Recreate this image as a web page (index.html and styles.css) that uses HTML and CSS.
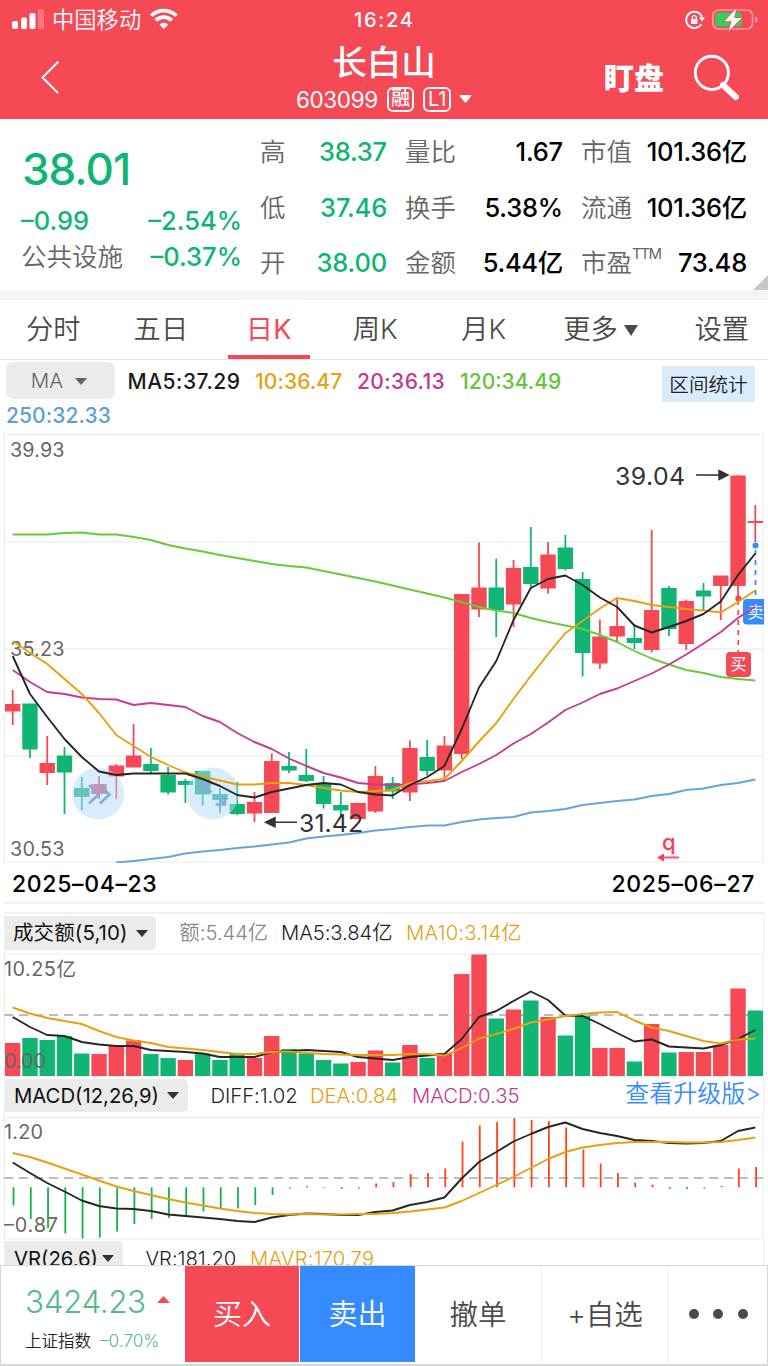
FILE: index.html
```html
<!DOCTYPE html>
<html lang="zh-CN">
<head>
<meta charset="utf-8">
<title>长白山 603099</title>
<link rel="stylesheet" href="styles.css">
</head>
<body>
<div class="app">
  <header class="header">
    <div class="status">
      <div class="status-left">
        <svg class="signal" width="33" height="22" viewBox="0 0 33 22"><g fill="#fff"><rect x="0" y="13" width="6" height="8" rx="2"/><rect x="9" y="9.500" width="6" height="11.500" rx="2"/><rect x="17.500" y="5" width="6" height="16" rx="2"/><rect x="26" y="1" width="6" height="20" rx="2" opacity=".25"/></g></svg>
        <span class="carrier">中国移动</span>
        <svg class="wifi" width="30" height="22" viewBox="0 0 30 22" fill="none" stroke="#fff" stroke-width="3.700"><path d="M2.200 7.700a18 18 0 0 1 25.200 0"/><path d="M6.800 12.400a11.500 11.500 0 0 1 16 0"/><path d="M14.800 21 10.300 16.500a6.700 6.700 0 0 1 9 0Z" fill="#fff" stroke="none"/></svg>
      </div>
      <span class="clock">16:24</span>
      <div class="status-right">
        <svg width="22" height="22" viewBox="0 0 22 22"><path d="M17.600 7A8.200 8.200 0 1 0 17 15.800" fill="none" stroke="#fff" stroke-width="1.900" stroke-linecap="round"/><path d="M14.600 8.300h6.400l-2.800 4.200z" fill="#fff"/><rect x="7" y="10" width="6.500" height="5" rx=".8" fill="#fff"/><path d="M8.300 10V8.600a2 2 0 0 1 4 0V10" fill="none" stroke="#fff" stroke-width="1.300"/></svg>
        <svg width="46" height="24" viewBox="0 0 46 24"><rect x="1" y="2" width="39.500" height="19" rx="5.500" fill="none" stroke="#fff" stroke-opacity=".45" stroke-width="1.700"/><path d="M43 8.500q2.500.5 2.500 3t-2.500 3z" fill="#fff" opacity=".45"/><rect x="3.500" y="4.500" width="26.500" height="14" rx="3.500" fill="#2fd158"/><path d="M24.500 0 12.500 13.200h7l-3 10.300L29.500 10h-7.300z" fill="#fff" stroke="#f54956" stroke-width="1.500" paint-order="stroke"/></svg>
      </div>
    </div>
    <div class="nav">
      <svg class="back" width="20" height="34" viewBox="0 0 20 34" fill="none" stroke="#fff" stroke-width="2"><path d="M18.500 1.500 2.500 17.500l15.500 15.500"/></svg>
      <div class="title">
        <h1>长白山</h1>
        <div class="code"><span>603099</span><i class="tag tag-cn">融</i><i class="tag">L1</i><svg width="13" height="8" viewBox="0 0 13 8"><path d="M1 0h11q1 0 .3 1L7.300 7.300q-.8.700-1.600 0L.7 1Q0 0 1 0z" fill="#fff"/></svg></div>
      </div>
      <div class="nav-right">
        <span class="watch">盯盘</span>
        <svg width="46" height="48" viewBox="0 0 46 48" fill="none" stroke="#fff"><circle cx="17.800" cy="18.800" r="16.600" stroke-width="3"/><path d="M29 31 41.800 43" stroke-width="6" stroke-linecap="round"/></svg>
      </div>
    </div>
  </header>

  <section class="quote">
    <div class="quote-main">
      <div class="price">38.01</div>
      <div class="row change"><span>–0.99</span><span>–2.54%</span></div>
      <div class="row sector"><span class="label">公共设施</span><span>–0.37%</span></div>
    </div>
    <dl class="stats">
      <div><dt>高</dt><dd class="down">38.37</dd></div><div><dt>量比</dt><dd>1.67</dd></div><div><dt>市值</dt><dd class="tight">101.36亿</dd></div>
      <div><dt>低</dt><dd class="down">37.46</dd></div><div><dt>换手</dt><dd>5.38%</dd></div><div><dt>流通</dt><dd class="tight">101.36亿</dd></div>
      <div><dt>开</dt><dd class="down">38.00</dd></div><div><dt>金额</dt><dd class="tight">5.44亿</dd></div><div><dt>市盈<sup>TTM</sup></dt><dd>73.48</dd></div>
    </dl>
    <i class="corner"></i>
  </section>

  <nav class="tabs">
    <span class="t1">分时</span><span class="t2">五日</span><span class="t3 active">日K</span><span class="t4">周K</span><span class="t5">月K</span><span class="t6">更多<i class="caret caret-lg"></i></span><span class="t7">设置</span>
  </nav>

  <section class="legend">
    <div class="legend-row">
      <span class="pill">MA<i class="caret"></i></span>
      <span class="ma5">MA5:37.29</span><span class="ma10">10:36.47</span><span class="ma20">20:36.13</span><span class="ma120">120:34.49</span>
      <span class="range">区间统计</span>
    </div>
    <div class="ma250">250:32.33</div>
  </section>

  <svg id="kline" class="chart" width="768" height="430" viewBox="0 433 768 430"></svg>
  <div class="dates"><span>2025–04–23</span><span>2025–06–27</span></div>

  <div class="sub sub-volume">
    <span class="picker"><span>成交额(5,10)</span><i class="caret"></i></span>
    <span class="v1">额:5.44亿</span><span class="v2">MA5:3.84亿</span><span class="v3">MA10:3.14亿</span>
  </div>
  <svg id="volume" class="chart" width="768" height="124" viewBox="0 953 768 124"></svg>

  <div class="sub sub-macd">
    <span class="picker">MACD(12,26,9)<i class="caret"></i></span>
    <span class="m1">DIFF:1.02</span><span class="m2">DEA:0.84</span><span class="m3">MACD:0.35</span>
    <span class="upgrade">查看升级版&gt;</span>
  </div>
  <svg id="macd" class="chart" width="768" height="123" viewBox="0 1117 768 123"></svg>

  <div class="sub sub-vr">
    <span class="picker">VR(26,6)<i class="caret"></i></span>
    <span class="r1">VR:181.20</span><span class="r2">MAVR:170.79</span>
  </div>

  <footer class="bar">
    <div class="index">
      <div class="index-top"><span>3424.23</span><svg width="13" height="7" viewBox="0 0 13 7"><path d="M6.500 0 13 7H0z" fill="#f54956"/></svg></div>
      <div class="index-sub"><span>上证指数</span><b>–0.70%</b></div>
    </div>
    <div class="buy">买入</div>
    <div class="sell">卖出</div>
    <div class="cell">撤单</div>
    <div class="cell">+自选</div>
    <div class="cell more"><i></i><i></i><i></i></div>
  </footer>
</div>
<script src="charts.js"></script>
</body>
</html>
```
FILE: styles.css
```css
* { box-sizing: border-box; }
body, h1, dl, dd { margin: 0; }
body {
  width: 768px;
  height: 1366px;
  overflow: hidden;
  background: #fff;
  color: #000;
  font-family: Inter, "Noto Sans CJK SC", sans-serif;
}
i, b { font-style: normal; font-weight: inherit; }
svg { display: block; flex: none; }
span, dt, dd { white-space: nowrap; }
.app { height: 1366px; display: flex; flex-direction: column; }
.app > * { flex: none; }

/* header */
.header { height: 119px; background: #f54956; color: #fff; }
.status { height: 40px; display: grid; grid-template-columns: 1fr 60px 1fr; align-items: center; }
.status-left { display: flex; align-items: center; padding-left: 12px; }
.signal { margin-top: -3px; }
.wifi { margin-top: -3px; }
.carrier { font-size: 22.300px; line-height: 30px; margin: 0 8px 0 7px; font-weight: 350; }
.clock { font-size: 20px; font-weight: 450; letter-spacing: 1.700px; }
.status-right { display: flex; justify-content: flex-end; align-items: center; gap: 6px; padding-right: 10px; margin-top: -1px; }
.nav { height: 79px; display: grid; grid-template-columns: 1fr 176px 1fr; }
.back { margin: 20px 0 0 40px; }
.title { display: flex; flex-direction: column; padding-top: 1px; }
h1 { font-size: 34.500px; line-height: 44px; font-weight: 500; text-align: center; }
.code { display: flex; align-items: center; height: 28px; font-size: 22.500px; letter-spacing: -.4px; }
.tag { height: 25px; width: 28px; border: 2px solid #fff; border-radius: 6px; margin-left: 9px; font-size: 20px; line-height: 21px; text-align: center; letter-spacing: 0; }
.tag-cn { font-size: 19px; font-weight: 500; line-height: 20px; }
.code svg { margin-left: 8px; }
.nav-right { display: flex; justify-content: flex-end; padding-right: 28px; }
.watch { font-size: 30px; line-height: 40px; font-weight: 900; margin: 18px 30px 0 0; }
.nav-right svg { margin-top: 14px; }

/* quote */
.quote { height: 181px; border-bottom: 10px solid #f5f5f5; display: flex; position: relative; font-size: 25.500px; font-weight: 450; }
.quote-main { width: 260px; padding: 23px 18px 0 21px; color: #10b574; }
.price { font-size: 44px; font-weight: 550; line-height: 54px; letter-spacing: -1px; padding-left: 1px; }
.row { display: flex; justify-content: space-between; line-height: 36px; }
.change { margin-top: 7px; height: 36px; }
.label, dt { color: #666; font-weight: 350; letter-spacing: 0; }
.stats { flex: 1; display: grid; grid-template-columns: 127px 158px 166px; grid-template-rows: repeat(3, 55.700px); column-gap: 18px; padding-top: 5px; }
.stats > div { display: flex; justify-content: space-between; align-items: center; line-height: 38px; }
dt { position: relative; }
dd { letter-spacing: -.2px; }
.tight { letter-spacing: -.3px; }
.down { color: #10b574; }
sup { position: absolute; left: 51px; top: 0; font-size: 15px; line-height: 20px; letter-spacing: -1.400px; font-weight: 400; }
.corner { position: absolute; right: 0; bottom: 0; border-left: 15px solid transparent; border-bottom: 15px solid #c8c8c8; }

/* tabs */
.tabs { height: 60px; border-bottom: 1px solid #e4e4e4; display: flex; font-size: 27.300px; line-height: 40px; color: #4a4a4a; font-weight: 350; padding: 0 19px 0 26px; }
.tabs span { display: flex; align-items: center; height: 59px; padding-top: 1px; }
.t2 { margin-left: 53px; }
.t3 { width: 82px; margin-left: 39.500px; justify-content: center; }
.tabs .active { color: #f54956; font-weight: 400; border-bottom: 4px solid #f54956; padding-top: 5px; }
.t4 { margin-left: 43px; }
.t5 { margin-left: 63.500px; }
.t6 { margin-left: 57px; }
.t7 { margin-left: auto; }
.caret { display: inline-block; border: 6.500px solid transparent; border-top: 7px solid #333; border-bottom: 0; }
.caret-lg { border-width: 11px 7.500px 0; border-top-color: #4a4a4a; margin-left: 6px; }

/* moving average legend */
.legend { height: 73px; padding: 2px 0 0 6px; font-size: 21px; font-weight: 450; }
.legend-row { height: 41px; display: flex; line-height: 40px; }
.pill { width: 109px; height: 37px; border-radius: 7px; background: #ebebeb; color: #666; font-size: 20.500px; font-weight: 350; display: flex; justify-content: center; align-items: center; gap: 12px; margin-right: 12.500px; padding-right: 3px; }
.pill .caret { border-top-color: #666; margin-top: 1px; }
.ma5 { color: #1a1a1a; letter-spacing: .5px; width: 127.500px; }
.ma10 { color: #e6a010; letter-spacing: .1px; width: 102px; }
.ma20 { color: #bf3990; letter-spacing: .4px; width: 103px; }
.ma120 { color: #62c436; letter-spacing: 0; }
.ma250 { color: #5a9fdb; letter-spacing: .1px; line-height: 26px; }
.range { margin: 4px 13px 0 auto; width: 93px; height: 36px; background: #d9ecfc; color: #222; font-size: 19.600px; line-height: 38px; text-align: center; font-weight: 350; }

/* charts */
.dates { height: 49px; display: flex; justify-content: space-between; align-items: flex-start; padding: 0 13px 0 12px; font-size: 23px; font-weight: 450; line-height: 42px; letter-spacing: .65px; position: relative; }
.dates::after { content: ""; position: absolute; left: 4px; right: 4px; top: 39px; border-top: 2px solid #f2f2f2; }
.sub { margin: 0 4px; border: 1px solid #f0f0f0; border-width: 0 1px; display: flex; font-size: 20.300px; color: #1f1f1f; letter-spacing: -.06px; font-weight: 350; }
.picker { background: #ebebeb; border-radius: 0 5px 5px 0; display: flex; align-items: center; justify-content: space-between; color: #111; font-weight: 400; }
.sub-volume { height: 41px; border-top-width: 2px; line-height: 38px; }
.sub-volume .picker { width: 151px; height: 34px; margin-top: 2px; padding: 0 8px; font-size: 20.500px; letter-spacing: .1px; }
.v1 { margin-left: 23.500px; width: 101.500px; color: #888; }
.v2 { width: 125px; letter-spacing: -.1px; }
.v3 { color: #e6a010; letter-spacing: .15px; }
.sub-macd { height: 40px; line-height: 37px; }
.sub-macd .picker { width: 183px; height: 33px; margin-top: 2px; padding: 0 9px; letter-spacing: 0; }
.m1 { margin-left: 22.500px; width: 99.500px; }
.m2 { width: 102px; color: #e6a010; }
.m3 { color: #bf3990; }
.upgrade { margin-left: auto; margin-right: 2px; color: #358bff; font-size: 24px; letter-spacing: 0; line-height: 34px; }
.sub-vr { height: 25px; overflow: hidden; line-height: 37px; }
.sub-vr .picker { width: 118px; height: 34px; margin-top: 1px; padding: 0 9px; letter-spacing: 0; }
.r1 { margin-left: 22.500px; width: 104.500px; }
.r2 { color: #e6a010; letter-spacing: .15px; }

/* bottom bar */
.bar { height: 101px; border: 1px solid #d8d8d8; border-bottom-width: 2px; display: flex; font-size: 29px; font-weight: 350; color: #4a4a4a; }
.index { width: 184px; padding: 17px 0 0 24px; }
.index-top { display: flex; align-items: center; height: 37px; font-size: 31.500px; letter-spacing: -.45px; color: #55b98e; gap: 11px; font-weight: 300; }
.index-top svg { margin-top: -5px; }
.index-sub { display: flex; align-items: center; height: 40px; font-size: 16.500px; color: #222; gap: 9px; }
.index-sub b { font-size: 17.200px; letter-spacing: 0; color: #55b98e; }
.buy, .sell, .cell { height: 96px; line-height: 97px; text-align: center; }
.buy { width: 114px; background: #f54956; color: #fff; margin-right: 1px; }
.sell { width: 115px; background: #358bff; color: #fff; }
.cell { width: 127px; border-right: 1px solid #eee; font-size: 28.500px; }
.more { flex: 1; border: 0; display: flex; align-items: center; justify-content: center; gap: 14.500px; }
.more i { width: 10px; height: 10px; border-radius: 50%; background: #4a4a4a; }

/* svg text */
.axis { font-size: 19.800px; fill: #666; font-weight: 400; }
.mark { font-size: 24.800px; fill: #333; font-weight: 400; }
.badge { font-size: 16px; fill: #fff; text-anchor: middle; }
.q { font-size: 22px; fill: #ff3b53; font-weight: 500; }
```
FILE: charts.js
```js
const RED = '#f54956', GREEN = '#10b574', BLACK = '#262626', GOLD = '#e6a010', PURPLE = '#c23c96', LIME = '#67c93c', BLUE = '#64a5de';
const X0 = 12.7, STEP = 17.27, BODY = 15.4;
const cx = i => X0 + STEP * i;
const put = (id, parts) => { document.getElementById(id).innerHTML = parts.join(''); };
const line = (ys, color, start = 0) =>
  `<polyline fill="none" stroke="${color}" stroke-width="1.9" stroke-linejoin="round" points="${ys.map((y, i) => cx(i + start).toFixed(1) + ',' + y).join(' ')}"/>`;
const rule = (x1, y1, x2, y2) => `<path d="M${x1} ${y1}L${x2} ${y2}" stroke="#efefef" stroke-width="1.3"/>`;
const dash = y => `<path d="M4 ${y}H763" stroke="#bdbdbd" stroke-width="2" stroke-dasharray="9.300 5.700"/>`;
const label = (x, y, t, w, cls = 'axis') => `<text x="${x}" y="${y}" class="${cls}" textLength="${w}">${t}</text>`;

/* candle: colour, high, body top, body bottom, low */
const candles = [
  ['r',690,704,711.5,725],['g',703.5,703.5,749.5,758],['r',736,763,773,785],['g',747,755.5,772.5,814],['g',777,788,797,810],
  ['r',776,784,794,799],['r',764,765.5,776.5,799],['r',724,755.5,767.5,767.5],['g',748,764,771,773.5],['g',767,775,792.5,794.5],
  ['g',779,781,785,803],['g',771,771,794.5,805.5],['g',788,794,800,813],['g',782,804,814,815],['r',792,802,813.5,822],
  ['r',753.5,761,813,813],['g',752,766,770.5,773],['g',749,775,781,782],['g',776,783,804,808.5],['g',792,805,810.5,816],
  ['r',803,803,819,819],['r',766,776,811.5,813],['g',777,783,791.5,799],['r',740.5,748,792.5,801],['g',740,757,771,775.5],
  ['r',736,745.5,770.5,779],['r',594,594,754,759],['r',542.5,587.5,609.5,617],['g',558.5,587.5,610,637],['r',560,568,604.5,627],
  ['g',527,567,584,587],['r',542,554.5,588.5,593.5],['g',535,547.5,569,570.5],['g',572,579,653,676.5],['r',619.5,636.5,663.5,669],
  ['r',598,626,636.5,642],['g',624,638,643,649],['r',530,610,650,652.5],['g',586,588,629,636],['r',599.5,601,644,650],
  ['g',583,590.5,596.5,611],['r',575.5,575.5,586,620],['r',475,475.5,586,597],['r',505,521,523,542]
];
const ma5 = [656,694,717,739,757,771.5,775,773.5,773.5,773.5,773.5,779,786,795,797.5,792,788.5,785,783,784.5,792,794.5,795.5,785,777,766,729,687.5,661,620,588,579,575.5,585,597.5,607,625.5,632.5,627,621,614,601.5,575,553.5];
const ma10 = [641,653,664,679,694,713,735,746,757,765,772.5,776.5,780.5,784.5,784.5,783,783,785,788,790.5,792,791,790,783,781,779,761,741.5,723,699,676,654,633,621,608.5,598,601,605,607,609,610.5,612.5,602,590.5];
const ma20 = [670,682,692,694,697.5,699,699.5,705,703,705,707,716,722,733,742,749,758.5,766,773,777.5,783,784.5,785,784.5,783,781,772,764,755,743.5,734,722.5,710,702.5,694,688.5,681,673.5,664.5,654.5,643.5,632,618,606.5];
const ma120 = [534.5,534.5,534.5,533,532.5,534.5,534.5,537,540,545,548.5,551.5,555,558,561,564,566,567.5,571,574.5,578,581.5,585.5,589.5,593.5,597.5,602,607,610.5,613,618,622,625.5,629,635,642,651,658.5,664.5,670,673,677,679,680.5];
const ma250 = [862.5,861,859,857,853.5,851.5,850,848,846.5,844.5,842.5,838.5,836.5,835,833,830.5,829,827,825.5,825.5,822,819.5,818,817,812.5,811,809,805,803,801,799.5,796,794,790,788.5,785,783,779.5];

put('kline', [
  `<rect x="4.500" y="434.500" width="758.500" height="427.500" fill="none" stroke="#ebebeb"/>`,
  rule(4, 542, 763, 542), rule(4, 649, 763, 649), rule(4, 756, 763, 756),
  label(10, 457, '39.93', 54.5), label(10, 656, '35.23', 54.5), label(10, 855.5, '30.53', 54.5),
  ...candles.map(([c, h, t, b, l], i) => {
    const f = c === 'r' ? RED : GREEN, x = cx(i);
    return `<path d="M${x - BODY / 2} ${t}h${BODY}V${b}h-${BODY}zM${x - .9} ${h}h1.800V${l}h-1.800z" fill="${f}"/>`;
  }),
  `<g fill="#b4dafa" fill-opacity=".5"><circle cx="98.200" cy="793.500" r="26"/><circle cx="212.800" cy="793.500" r="26"/></g>`,
  `<g fill="none" stroke="#86aadf" stroke-width="2.600"><path d="M89 785l9.500 9.500-9.500 9M100 785l9.500 9.500-9.500 9M211.500 792.500 203 784M203 792v-8.500h8.500M216.500 796l8.500 8.500M225 796.500v8h-9.500"/></g>`,
  line(ma250, BLUE, 6), line(ma120, LIME),
  `<path d="M738.300 600v52" stroke="${RED}" stroke-width="1.800" stroke-dasharray="5 5"/><circle cx="738.300" cy="598.500" r="3" fill="${RED}"/>`,
  `<path d="M755.500 550v46" stroke="#358bff" stroke-width="1.800" stroke-dasharray="5 5"/><circle cx="755.500" cy="545.500" r="3" fill="#358bff"/>`,
  `<path d="M764 599v25.500h-17q-4 0-4-4V603q0-4 4-4z" fill="#358bff"/><text x="755.500" y="617.500" class="badge">卖</text>`,
  line(ma20, PURPLE), line(ma10, GOLD), line(ma5, BLACK),
  `<rect x="726" y="652" width="25" height="25" rx="4" fill="${RED}"/><text x="738.500" y="670" class="badge">买</text>`,
  label(615, 484.800, '39.04', 70, 'mark'), `<path d="M696 475h23v-4.500l9 4.500-9 4.500v-4" fill="#333" stroke="#333" stroke-width="1.500"/>`,
  label(299, 832, '31.42', 64, 'mark'), `<path d="M297 822.300h-22v-4.500l-9.500 4.500 9.500 4.500v-4" fill="#333" stroke="#333" stroke-width="1.500"/>`,
  `<text x="662" y="850" class="q">q</text><path d="M679 857.500h-18" stroke="#ff5369" stroke-width="2"/><path d="M657 857.500l7-4v8z" fill="#ff3b53"/>`
]);

const turnover = [
  'r1043','g1038','g1040','g1036','g1053.5','r1054','r1046','r1040.5','g1054','g1058','r1060','g1053.5','g1060','g1054','r1058','r1036','g1049','g1053.5','g1060','g1063.5','r1062','r1050.5',
  'g1062.5','r1045','g1058','r1053','r974','r954.5','g1018.5','r1009.5','g1000.5','r1017','g1035.5','g1015.5','r1048','r1048','g1061.5','r1024','g1052.5','r1052','r1052','r1045','r988.5','g1010.5'
];
const vol5 = [1017,1027,1035,1036,1042,1044.5,1046,1046,1050,1051,1052,1053.5,1057,1057,1057,1052,1051,1050,1051,1052,1057,1058.5,1060,1057,1055.5,1054,1039,1017,1011,1001,991.5,1000,1015.5,1016,1024,1033,1041.5,1039.5,1046.5,1047.5,1048.5,1045,1039,1030];
const vol10 = [1007.5,1013.5,1018,1021,1024,1031,1037,1040.5,1043,1047,1048.5,1050,1052,1054,1054,1052,1051.5,1053,1054,1054.5,1055,1055,1055,1054,1054,1055.5,1048,1038.5,1034,1029,1022.5,1019.5,1016,1014,1012.5,1012,1020.5,1027.5,1031,1036,1041,1043.5,1039.5,1038.5];
put('volume', [
  `<rect x="4.500" y="954" width="758.500" height="122" fill="none" stroke="#ebebeb"/>`, dash(1015),
  ...turnover.map((s, i) => `<rect x="${cx(i) - BODY / 2}" y="${s.slice(1)}" width="${BODY}" height="${1076 - s.slice(1)}" fill="${s[0] === 'r' ? RED : GREEN}"/>`),
  line(vol5, BLACK), line(vol10, GOLD),
  label(4, 975.5, '10.25亿', 72), label(4, 1068, '0.00', 42)
]);

const hist = [1205.5,1219,1228,1233.5,1238.5,1237.5,1231.5,1224,1219,1218,1215,1211.5,1208.5,1208.5,1205,1195,1188.5,1186,1188,1189,1188.5,1183.5,1182,1174,1173,1168.5,1141.5,1125.5,1122,1118,1120,1121,1127.5,1149.5,1163.5,1173,1182.5,1184.5,1189,1189,1188.5,1186,1168.5,1167];
const diff = [1162.5,1173,1183,1191.5,1200.5,1206,1208.5,1209,1211,1214.5,1216,1217.5,1219,1221,1222,1217.5,1215,1213.5,1214,1215,1215,1212,1210.5,1205,1202,1197.5,1178.5,1162,1152,1141.5,1134,1127,1122.5,1129,1133,1136,1140,1141,1143,1143.5,1143,1141,1131,1127.5];
const dea = [1153,1157,1162.5,1168.5,1174.5,1180.5,1186.5,1191,1195,1199,1202.5,1205.5,1208.5,1211,1213,1214,1214.5,1214,1214.5,1214.5,1214,1214,1213,1211.5,1209.5,1207.5,1201,1193,1185,1177,1168,1159,1152,1147.5,1145,1143,1142,1142,1142,1142.5,1142.5,1142,1140,1137.5];
put('macd', [
  `<rect x="4.500" y="1117.500" width="758.500" height="121.500" fill="none" stroke="#ebebeb"/>`, dash(1178),
  label(4, 1139, '1.20', 39), label(4, 1231.5, '–0.87', 54),
  ...hist.map((y, i) => `<path d="M${cx(i) + .8} 1187.300V${y}" stroke="${y < 1187.3 ? '#ff4316' : '#12b34a'}" stroke-width="1.800"/>`),
  line(diff, BLACK), line(dea, GOLD)
]);
```
